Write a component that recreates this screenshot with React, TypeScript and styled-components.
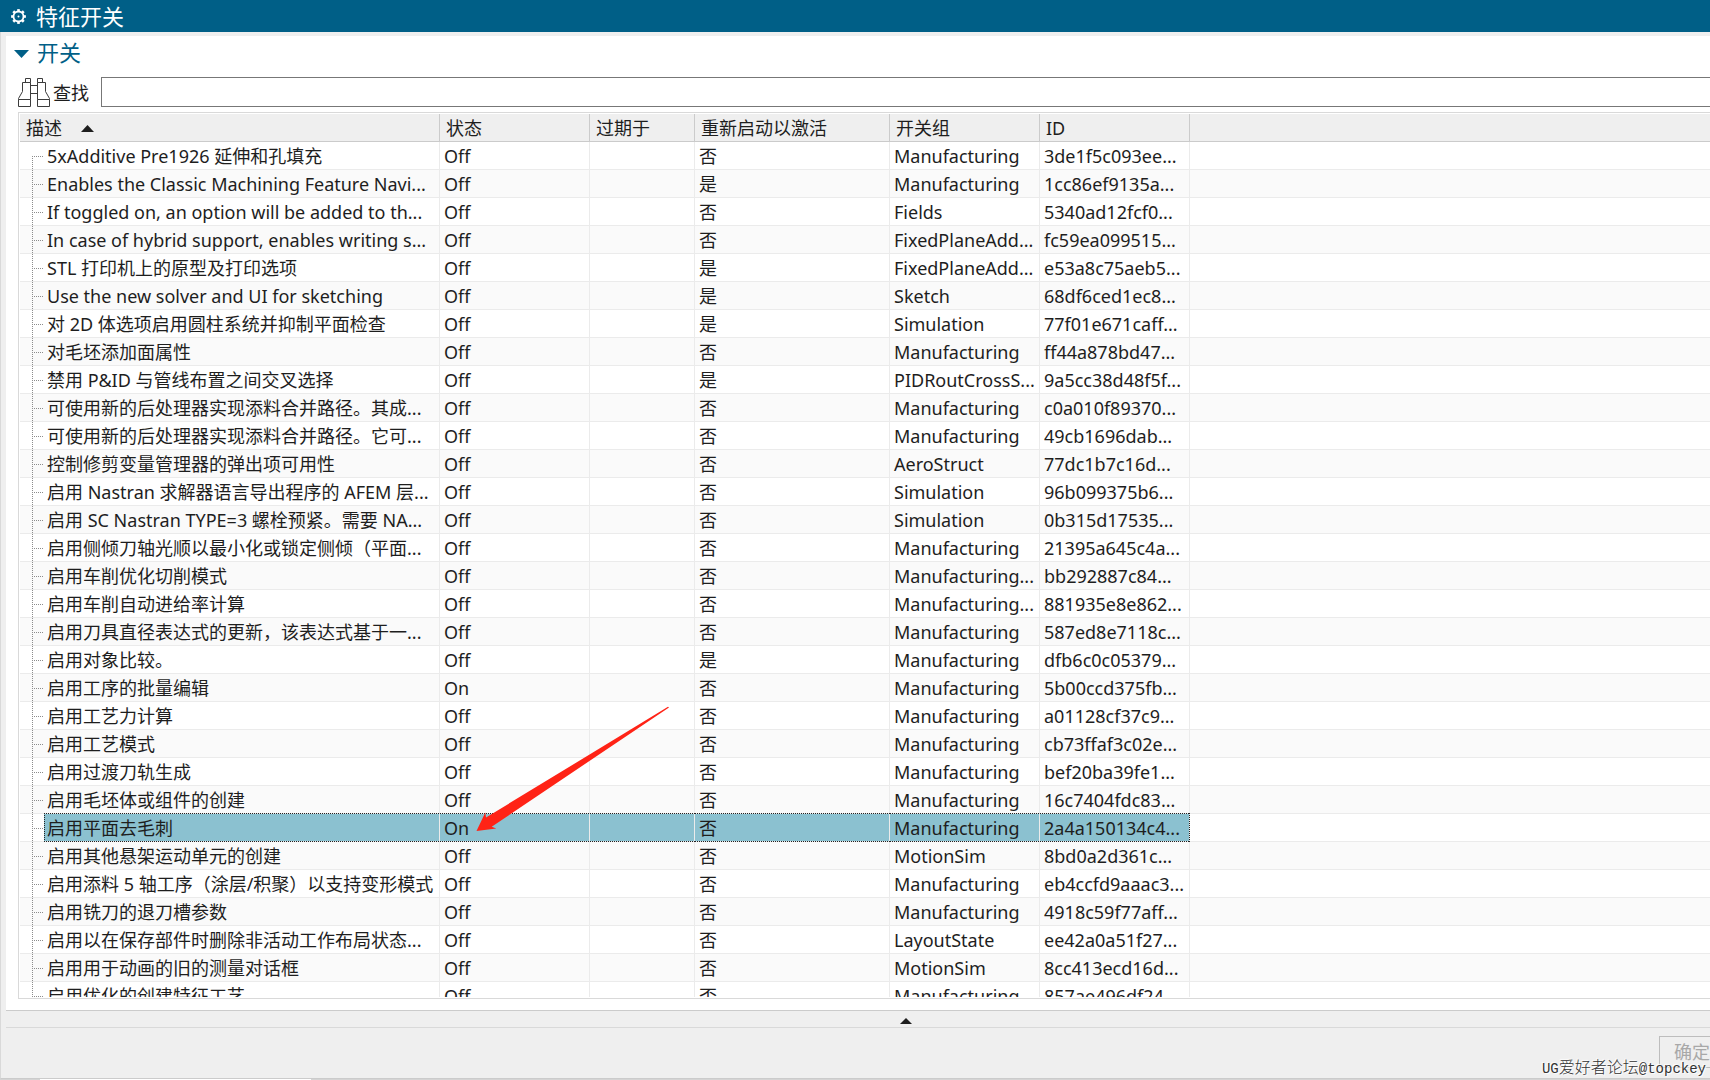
import React from "react";
import styled, { createGlobalStyle, css } from "styled-components";

const color = {
  brand: "#005f87",
  face: "#efefef",
  edge: "#d9d9d9",
  rule: "#cbcbcb",
  grid: "#ebebeb",
  text: "#1e1e1e",
  selected: "#8bc1d0",
  annotation: "#ff2316",
};

const dots = (direction: string, ink: string) =>
  `repeating-linear-gradient(${direction}, ${ink} 0 1px, transparent 1px 2px)`;

const GlobalStyle = createGlobalStyle`
  * { box-sizing: border-box; }
  body {
    margin: 0;
    background: ${color.face};
    color: ${color.text};
    font: 18px/28px "Noto Sans", "Noto Sans CJK SC", sans-serif;
  }
  button, input { font: inherit; color: inherit; margin: 0; }
`;

const Screen = styled.div`
  position: relative;
  height: 100vh;
  overflow: hidden;
`;

/* The dialog is wider than the screen and runs off its right edge. */
const Dialog = styled.main`
  position: relative;
  display: flex;
  flex-direction: column;
  width: calc(100% + 100px);
  height: 100%;
`;

const TitleBar = styled.header`
  display: flex;
  align-items: center;
  gap: 9px;
  height: 32px;
  flex: none;
  padding-left: 10px;
  background: ${color.brand};
  color: #fff;
`;

const Title = styled.h1`
  margin: 0;
  font-size: 22px;
  line-height: 32px;
  font-weight: 400;
`;

const Frame = styled.div`
  display: flex;
  flex-direction: column;
  flex: 1;
  min-height: 0;
  padding: 4px 5px 0;
  border-left: 1px solid ${color.edge};
  border-bottom: 1px solid ${color.rule};
`;

const Panel = styled.section`
  display: flex;
  flex-direction: column;
  flex: 1;
  min-height: 0;
  padding: 0 12px 11px;
  background: #fff;
  border-bottom: 1px solid ${color.rule};
`;

const GroupToggle = styled.button`
  display: flex;
  align-items: center;
  align-self: flex-start;
  gap: 8px;
  height: 35px;
  padding: 0;
  margin-left: -4px;
  border: 0;
  background: none;
  color: ${color.brand};
  font-size: 22px;
`;

const GroupTitle = styled.span`
  padding-bottom: 3px;
`;

const SearchRow = styled.div`
  display: flex;
  align-items: center;
  gap: 12px;
  height: 41px;
  padding-top: 1px;
`;

const SearchLabel = styled.label`
  display: flex;
  align-items: center;
  gap: 3px;
`;

const SearchText = styled.span`
  padding-top: 2px;
`;

const SearchInput = styled.input`
  flex: 1;
  height: 30px;
  border: 1px solid #777;
  background: #fff;
  outline: none;
`;

const TableView = styled.div`
  flex: 1;
  min-height: 0;
  overflow: hidden;
  padding: 1px;
  border: 1px solid ${color.edge};
  display: flex;
`;

const TableClip = styled.div`
  flex: 1;
  overflow: hidden;
`;

const Table = styled.table`
  width: 100%;
  table-layout: fixed;
  border-collapse: separate;
  border-spacing: 0;
`;

const Col = styled.col<{ $width?: number }>`
  width: ${(p) => (p.$width ? `${p.$width}px` : "auto")};
`;

const HeadCell = styled.th`
  height: 28px;
  padding: 2px 0 0 6px;
  background: ${color.face};
  border-right: 1px solid ${color.rule};
  border-bottom: 1px solid ${color.rule};
  font-weight: 400;
  line-height: 25px;
  text-align: left;
  white-space: nowrap;
`;

const SortButton = styled.button`
  display: flex;
  align-items: center;
  gap: 19px;
  height: 25px;
  padding: 0;
  border: 0;
  background: none;
`;

const Cell = styled.td<{ $tree?: boolean; $selected?: boolean; $last?: boolean }>`
  position: relative;
  height: 28px;
  padding: 2px 0 0 ${(p) => (p.$tree ? 27 : 4)}px;
  border-right: 1px solid ${color.grid};
  border-bottom: 1px solid ${color.grid};
  line-height: 25px;
  white-space: nowrap;
  ${(p) =>
    p.$selected &&
    css`
      background: ${p.$tree
        ? `linear-gradient(to right, #fff 24px, ${color.selected} 24px)`
        : color.selected};
      &::after {
        content: "";
        position: absolute;
        inset: -1px -1px -1px ${p.$tree ? 24 : 0}px;
        background: ${dots("to right", "#222")} top / 100% 1px no-repeat,
          ${dots("to right", "#222")} bottom / 100% 1px no-repeat
          ${p.$tree ? `, ${dots("to bottom", "#222")} left / 1px 100% no-repeat` : ""}
          ${p.$last ? `, ${dots("to bottom", "#222")} right / 1px 100% no-repeat` : ""};
      }
    `}
`;

const Filler = styled.td`
  border-bottom: 1px solid ${color.grid};
`;

const FillerHead = styled.td`
  background: ${color.face};
  border-bottom: 1px solid ${color.rule};
`;

const Row = styled.tr`
  background: #fff;
  &:nth-child(even) {
    background: #fafafa;
  }
`;

const Branch = styled.span<{ $edge?: "first" | "last" }>`
  position: absolute;
  left: 12px;
  top: ${(p) => (p.$edge === "first" ? 14 : 0)}px;
  bottom: ${(p) => (p.$edge === "last" ? 12 : -1)}px;
  width: 11px;
  background: ${dots("to bottom", "#8c8c8c")} left / 1px 100% no-repeat;
  &::after {
    content: "";
    position: absolute;
    left: 0;
    right: 0;
    top: ${(p) => (p.$edge === "first" ? 0 : 14)}px;
    height: 1px;
    background: ${dots("to right", "#8c8c8c")};
  }
`;

const Splitter = styled.button`
  display: flex;
  align-items: center;
  justify-content: center;
  flex: none;
  height: 17px;
  padding: 3px 0 0;
  border: 0;
  border-bottom: 1px solid ${color.edge};
  background: none;
`;

const Footer = styled.footer`
  display: flex;
  justify-content: flex-end;
  flex: none;
  height: 50px;
  padding: 8px 80px 10px 0;
`;

const OkButton = styled.button`
  width: 66px;
  height: 32px;
  padding: 0;
  border: 1px solid #bdbdbd;
  background: ${color.face};
  &:disabled {
    color: #a8a8a8;
  }
`;

const Backdrop = styled.div`
  flex: none;
  height: 1px;
  background: linear-gradient(to right, #d4d4d4 40px, #fff 40px, #fff 311px, #d4d4d4 311px);
`;

const Annotation = styled.svg`
  position: absolute;
  left: 476px;
  top: 706px;
  pointer-events: none;
`;

const Watermark = styled.div`
  position: absolute;
  right: 4px;
  bottom: 1px;
  color: #333;
  font: 14px/20px "Liberation Mono", "Noto Sans CJK SC", monospace;
  text-shadow: 1px 1px 1px #fff, -1px -1px 1px #fff;
`;

const WatermarkName = styled.span`
  font-size: 16px;
  font-weight: 300;
`;

const GearIcon = () => (
  <svg width="17" height="17" viewBox="0 0 17 17" aria-hidden="true">
    <g fill="none" stroke="#fff">
      <circle cx="8.5" cy="8.5" r="5" strokeWidth="1.8" />
      {[0, 45, 90, 135, 180, 225, 270, 315].map((a) => (
        <path key={a} d="M8.5 3.4V1.1" strokeWidth="2.6" transform={`rotate(${a} 8.5 8.5)`} />
      ))}
    </g>
    <circle cx="8.5" cy="8.5" r="1" fill="#fff" />
  </svg>
);

const BinocularsIcon = () => (
  <svg width="32" height="30" viewBox="0 0 32 30" aria-hidden="true">
    <g fill="#fff" stroke="#3c3c3c">
      <path d="M12.5 8.5h7v8h-7z" />
      <path d="M7.5 1.5h5v4h-5z" />
      <path d="M19.5 1.5h5v4h-5z" />
      <path d="M4.5 5.5h8v17H.5v-1l4-7z" />
      <path d="M19.5 5.5h8v9l4 7v1h-12z" />
      <path d="M.5 22.5h12v7H.5z" />
      <path d="M19.5 22.5h12v7h-12z" />
    </g>
  </svg>
);

const Triangle = ({ w, h, down, fill }: { w: number; h: number; down?: boolean; fill: string }) => (
  <svg width={w} height={h} viewBox={`0 0 ${w} ${h}`} aria-hidden="true">
    <path d={down ? `M0 0H${w}L${w / 2} ${h}z` : `M0 ${h}H${w}L${w / 2} 0z`} fill={fill} />
  </svg>
);

type Toggle = [name: string, state: string, restart: string, group: string, id: string];

const M = "Manufacturing";
const toggles: Toggle[] = [
  ["5xAdditive Pre1926 延伸和孔填充", "Off", "否", M, "3de1f5c093ee..."],
  ["Enables the Classic Machining Feature Navi...", "Off", "是", M, "1cc86ef9135a..."],
  ["If toggled on, an option will be added to th...", "Off", "否", "Fields", "5340ad12fcf0..."],
  ["In case of hybrid support, enables writing s...", "Off", "否", "FixedPlaneAdd...", "fc59ea099515..."],
  ["STL 打印机上的原型及打印选项", "Off", "是", "FixedPlaneAdd...", "e53a8c75aeb5..."],
  ["Use the new solver and UI for sketching", "Off", "是", "Sketch", "68df6ced1ec8..."],
  ["对 2D 体选项启用圆柱系统并抑制平面检查", "Off", "是", "Simulation", "77f01e671caff..."],
  ["对毛坯添加面属性", "Off", "否", M, "ff44a878bd47..."],
  ["禁用 P&ID 与管线布置之间交叉选择", "Off", "是", "PIDRoutCrossS...", "9a5cc38d48f5f..."],
  ["可使用新的后处理器实现添料合并路径。其成...", "Off", "否", M, "c0a010f89370..."],
  ["可使用新的后处理器实现添料合并路径。它可...", "Off", "否", M, "49cb1696dab..."],
  ["控制修剪变量管理器的弹出项可用性", "Off", "否", "AeroStruct", "77dc1b7c16d..."],
  ["启用 Nastran 求解器语言导出程序的 AFEM 层...", "Off", "否", "Simulation", "96b099375b6..."],
  ["启用 SC Nastran TYPE=3 螺栓预紧。需要 NA...", "Off", "否", "Simulation", "0b315d17535..."],
  ["启用侧倾刀轴光顺以最小化或锁定侧倾（平面...", "Off", "否", M, "21395a645c4a..."],
  ["启用车削优化切削模式", "Off", "否", "Manufacturing...", "bb292887c84..."],
  ["启用车削自动进给率计算", "Off", "否", "Manufacturing...", "881935e8e862..."],
  ["启用刀具直径表达式的更新，该表达式基于一...", "Off", "否", M, "587ed8e7118c..."],
  ["启用对象比较。", "Off", "是", M, "dfb6c0c05379..."],
  ["启用工序的批量编辑", "On", "否", M, "5b00ccd375fb..."],
  ["启用工艺力计算", "Off", "否", M, "a01128cf37c9..."],
  ["启用工艺模式", "Off", "否", M, "cb73ffaf3c02e..."],
  ["启用过渡刀轨生成", "Off", "否", M, "bef20ba39fe1..."],
  ["启用毛坯体或组件的创建", "Off", "否", M, "16c7404fdc83..."],
  ["启用平面去毛刺", "On", "否", M, "2a4a150134c4..."],
  ["启用其他悬架运动单元的创建", "Off", "否", "MotionSim", "8bd0a2d361c..."],
  ["启用添料 5 轴工序（涂层/积聚）以支持变形模式", "Off", "否", M, "eb4ccfd9aaac3..."],
  ["启用铣刀的退刀槽参数", "Off", "否", M, "4918c59f77aff..."],
  ["启用以在保存部件时删除非活动工作布局状态...", "Off", "否", "LayoutState", "ee42a0a51f27..."],
  ["启用用于动画的旧的测量对话框", "Off", "否", "MotionSim", "8cc413ecd16d..."],
  ["启用优化的创建特征工艺", "Off", "否", M, "857ae496df24..."],
];

const selectedIndex = 24;

export default function App() {
  return (
    <Screen>
      <GlobalStyle />
      <Dialog>
        <TitleBar>
          <GearIcon />
          <Title>特征开关</Title>
        </TitleBar>
        <Frame>
          <Panel>
            <GroupToggle type="button" aria-expanded="true">
              <Triangle w={15} h={8} down fill={color.brand} />
              <GroupTitle>开关</GroupTitle>
            </GroupToggle>
            <SearchRow>
              <SearchLabel htmlFor="search">
                <BinocularsIcon />
                <SearchText>查找</SearchText>
              </SearchLabel>
              <SearchInput id="search" type="text" />
            </SearchRow>
            <TableView>
              <TableClip>
                <Table>
                  <colgroup>
                    <Col $width={420} />
                    <Col $width={150} />
                    <Col $width={105} />
                    <Col $width={195} />
                    <Col $width={150} />
                    <Col $width={150} />
                    <Col />
                  </colgroup>
                  <thead>
                    <tr>
                      <HeadCell>
                        <SortButton type="button">
                          描述
                          <Triangle w={13} h={7} fill={color.text} />
                        </SortButton>
                      </HeadCell>
                      <HeadCell>状态</HeadCell>
                      <HeadCell>过期于</HeadCell>
                      <HeadCell>重新启动以激活</HeadCell>
                      <HeadCell>开关组</HeadCell>
                      <HeadCell>ID</HeadCell>
                      <FillerHead />
                    </tr>
                  </thead>
                  <tbody>
                    {toggles.map(([name, state, restart, group, id], i) => {
                      const selected = i === selectedIndex;
                      const edge = i === 0 ? "first" : i === toggles.length - 1 ? "last" : undefined;
                      return (
                        <Row key={id} aria-selected={selected}>
                          <Cell $tree $selected={selected}>
                            <Branch $edge={edge} />
                            {name}
                          </Cell>
                          <Cell $selected={selected}>{state}</Cell>
                          <Cell $selected={selected} />
                          <Cell $selected={selected}>{restart}</Cell>
                          <Cell $selected={selected}>{group}</Cell>
                          <Cell $selected={selected} $last>
                            {id}
                          </Cell>
                          <Filler />
                        </Row>
                      );
                    })}
                  </tbody>
                </Table>
              </TableClip>
            </TableView>
          </Panel>
          <Splitter type="button" aria-label="展开">
            <Triangle w={12} h={6} fill={color.text} />
          </Splitter>
          <Footer>
            <OkButton type="button" disabled>
              确定
            </OkButton>
          </Footer>
        </Frame>
        <Backdrop />
        <Annotation width="194" height="126" viewBox="476 706 194 126" aria-hidden="true">
          <path
            d="M476.5 831 485.3 812.5 486 817.5 668 706.8 669 707.5 491.7 826.7 496.3 828.5z"
            fill={color.annotation}
          />
        </Annotation>
      </Dialog>
      <Watermark>
        UG<WatermarkName>爱好者论坛</WatermarkName>@topckey
      </Watermark>
    </Screen>
  );
}
